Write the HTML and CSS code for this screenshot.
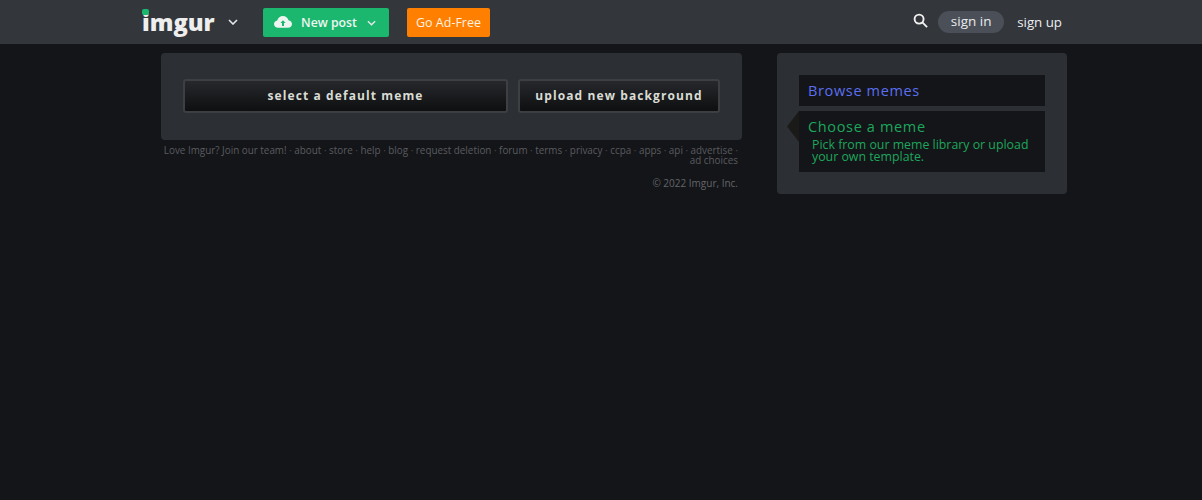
FILE: index.html
```html
<!DOCTYPE html>
<html lang="en">
<head>
<meta charset="utf-8">
<title>Imgur meme generator</title>
<link rel="stylesheet" href="styles.css">
</head>
<body>
<header class="topbar">
  <div class="topbar-left">
    <a class="logo"><span class="logo-dot"></span>imgur</a>
    <svg class="chev logo-chev" viewBox="0 0 10 6" width="10" height="6"><path d="M1 1l4 4 4-4" /></svg>
    <a class="btn-new">
      <svg class="cloud" viewBox="0 0 18 12" width="18" height="12"><path class="cloud-body" d="M4.2 11.8C1.9 11.8 0 10.200 0 8.100c0-1.900 1.400-3.300 3.200-3.600C3.900 2 6.200 0 9 0c2.600 0 4.800 1.700 5.500 4.200 2 .2 3.500 1.900 3.500 3.900 0 2.100-1.800 3.700-4 3.700z"/><path class="cloud-arrow" d="M9 4.200l2.600 2.800H10v3H8V7H6.400z"/></svg>
      <span>New post</span>
      <svg class="chev chev-small" viewBox="0 0 10 6" width="9" height="6"><path d="M1 1l4 4 4-4" /></svg>
    </a>
    <a class="btn-adfree">Go Ad-Free</a>
  </div>
  <div class="topbar-right">
    <svg class="search" viewBox="0 0 16 16" width="15" height="15"><circle cx="6.500" cy="6.500" r="4.800"/><path d="M10 10l5 5"/></svg>
    <a class="signin">sign in</a>
    <a class="signup">sign up</a>
  </div>
</header>
<main class="page">
  <section class="col-left">
    <div class="panel panel-actions">
      <button class="dark-btn dark-btn-wide">select a default meme</button>
      <button class="dark-btn dark-btn-narrow">upload new background</button>
    </div>
    <footer class="foot">
      <p class="foot-links">Love Imgur? Join our team! <i>·</i> about <i>·</i> store <i>·</i> help <i>·</i> blog <i>·</i> request deletion <i>·</i> forum <i>·</i> terms <i>·</i> privacy <i>·</i> ccpa <i>·</i> apps <i>·</i> api <i>·</i> advertise <i>·</i><br>ad choices</p>
      <p class="copyright">© 2022 Imgur, Inc.</p>
    </footer>
  </section>
  <aside class="panel panel-side">
    <a class="side-item browse">Browse memes</a>
    <div class="side-item choose">
      <span class="pointer"></span>
      <h2 class="choose-title">Choose a meme</h2>
      <p class="choose-text">Pick from our meme library or upload<br>your own template.</p>
    </div>
  </aside>
</main>
</body>
</html>
```
FILE: styles.css
```css
* { box-sizing: border-box; }
html, body { margin: 0; height: 100%; }
body {
  background: #141518;
  font-family: "Open Sans", "Liberation Sans", sans-serif;
  overflow: hidden;
}
.topbar {
  height: 44px;
  background: #33363b;
  display: flex;
  justify-content: space-between;
  align-items: center;
  padding: 0 140px 0 142px;
}
.topbar-left, .topbar-right { display: flex; align-items: center; }
.logo {
  position: relative;
  color: #eeeeee;
  font-size: 23.700px;
  font-weight: 800;
  line-height: 30px;
  width: 74px;
  letter-spacing: 0;
}
.logo-dot {
  position: absolute;
  left: 0;
  top: 2px;
  width: 7px;
  height: 6px;
  border-radius: 2px;
  background: #1bb76e;
}
.chev { fill: none; stroke: #e6e8ea; stroke-width: 1.600; }
.logo-chev { margin: 0 0 0 12px; }
.chev-small { margin-top: 1px; }
.btn-new {
  margin-left: 25px;
  width: 126px;
  height: 29px;
  border-radius: 2px;
  background: #1bb76e;
  color: #f0f5f2;
  font-size: 12.300px;
  font-weight: 600;
  display: flex;
  align-items: center;
  padding-left: 11px;
}
.btn-new span { margin: 0 10px 0 9px; }
.cloud-body { fill: #eef4f0; }
.cloud-arrow { fill: #1bb76e; }
.btn-adfree {
  margin-left: 18px;
  width: 83px;
  height: 29px;
  border-radius: 2px;
  background: #ff7f00;
  color: #fff3e4;
  font-size: 12.500px;
  line-height: 29px;
  text-align: center;
}
.search { fill: none; stroke: #f2f2f2; stroke-width: 2; margin-bottom: 3px; }
.signin {
  margin-left: 10px;
  width: 66px;
  height: 22px;
  border-radius: 11px;
  background: #4b4f58;
  color: #e9ebed;
  font-size: 13.500px;
  line-height: 21px;
  text-align: center;
}
.signup {
  margin-left: 13px;
  color: #eceef0;
  font-size: 13.300px;
  line-height: 20px;
  margin-top: -1px;
}
.page {
  display: flex;
  align-items: flex-start;
  padding: 9px 0 0 161px;
  gap: 35px;
}
.col-left { width: 581px; }
.panel { background: #2c2f34; border-radius: 4px; }
.panel-actions {
  height: 87px;
  padding: 26px 22px 0;
  display: flex;
  gap: 10px;
  align-items: flex-start;
}
.dark-btn {
  height: 34px;
  padding: 0 0 2px;
  border: 2px solid #3d3f42;
  border-radius: 3px;
  background: linear-gradient(#26282c, #0e0f10);
  color: #d9dcd4;
  font-family: inherit;
  font-size: 12px;
  font-weight: 700;
  letter-spacing: 1.100px;
}
.dark-btn-wide { width: 325px; }
.dark-btn-narrow { width: 202px; }
.foot { padding: 5px 4px 0 0; color: #5a5c60; font-size: 9.870px; text-align: right; }
.foot p { margin: 0; }
.foot i { font-style: normal; color: #47494e; }
.foot-links { line-height: 10px; text-align: right; }
.foot .copyright { margin-top: 12px; line-height: 12px; font-size: 10px; color: #63656a; }
.panel-side {
  width: 290px;
  height: 141px;
  padding: 22px 22px 0;
}
.side-item { display: block; background: #141518; margin: 0; }
.browse {
  height: 31px;
  padding-left: 9px;
  color: #5b6ff0;
  font-size: 14.500px;
  line-height: 31px;
  letter-spacing: 0.650px;
  margin-bottom: 5px;
}
.choose { position: relative; height: 61px; padding: 6px 0 0 9px; color: #1ca75c; }
.pointer {
  position: absolute;
  left: -12px;
  top: 0;
  width: 12px;
  height: 31px;
  background: #1a1a18;
  clip-path: polygon(100% 0, 0 50%, 100% 100%);
}
.choose-title { margin: 0; font-size: 14.500px; font-weight: 400; line-height: 20px; letter-spacing: 0.650px; }
.choose-text { margin: 2px 0 0 4px; font-size: 12.350px; line-height: 12px; }
```
